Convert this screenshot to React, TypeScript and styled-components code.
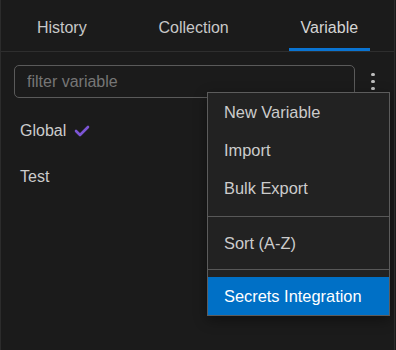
import React from 'react';
import styled, { createGlobalStyle } from 'styled-components';

const GlobalStyle = createGlobalStyle`
  html, body {
    margin: 0;
    padding: 0;
    background: #1a1a1a;
  }
  * {
    box-sizing: border-box;
  }
`;

const Panel = styled.div`
  position: relative;
  width: 395px;
  height: 350px;
  background: #1b1b1b;
  border-left: 1px solid #2c2c2c;
  border-right: 1px solid #2c2c2c;
  font-family: 'Liberation Sans', Arial, sans-serif;
  color: #cccccc;
  overflow: hidden;
`;

const TabBar = styled.div`
  display: flex;
  justify-content: space-around;
  height: 52px;
  border-bottom: 1px solid #2e2e2e;
`;

const Tab = styled.div<{ $active?: boolean }>`
  position: relative;
  display: flex;
  align-items: center;
  padding: 5px 12px 0;
  font-size: 16px;
  color: ${(p) => (p.$active ? '#d4d4d4' : '#c8c8c8')};
  cursor: pointer;
  &::after {
    content: '';
    display: ${(p) => (p.$active ? 'block' : 'none')};
    position: absolute;
    left: 0;
    right: 0;
    bottom: 0;
    height: 3px;
    background: #0a74d1;
  }
`;

const Toolbar = styled.div`
  display: flex;
  align-items: center;
  padding: 13px 0 0 13px;
`;

const SearchInput = styled.input`
  width: 341px;
  height: 33px;
  padding: 0 12px;
  background: transparent;
  border: 1px solid #5a5a5a;
  border-radius: 5px;
  font-family: inherit;
  font-size: 16px;
  color: #cccccc;
  outline: none;
  &::placeholder {
    color: #767676;
  }
`;

const KebabButton = styled.div`
  display: flex;
  flex-direction: column;
  align-items: center;
  justify-content: center;
  gap: 3.5px;
  width: 24px;
  height: 33px;
  margin-left: 6px;
  span {
    width: 3.5px;
    height: 3.5px;
    border-radius: 50%;
    background: #bdbdbd;
  }
`;

const List = styled.div`
  padding-top: 10px;
`;

const Row = styled.div`
  display: flex;
  align-items: center;
  gap: 8px;
  height: 46px;
  padding-left: 19px;
  font-size: 16px;
  color: #cccccc;
`;

const Menu = styled.div`
  position: absolute;
  left: 206px;
  top: 92px;
  width: 183px;
  background: #222222;
  border: 1px solid #5c5c5c;
  box-shadow: 0 4px 12px rgba(0, 0, 0, 0.4);
`;

const MenuItem = styled.div<{ $selected?: boolean }>`
  display: flex;
  align-items: center;
  height: 38px;
  padding: 0 16px;
  font-size: 16.4px;
  color: ${(p) => (p.$selected ? '#ffffff' : '#cccccc')};
  background: ${(p) => (p.$selected ? '#0070c6' : 'transparent')};
`;

const Divider = styled.div<{ $top: number; $bottom: number }>`
  height: 1px;
  background: #585858;
  margin: ${(p) => p.$top}px 0 ${(p) => p.$bottom}px;
`;

const Check = () => (
  <svg width="16" height="12" viewBox="0 0 16 12">
    <polyline
      points="2,6 6,10 14,2"
      fill="none"
      stroke="#7c55d4"
      strokeWidth="2.6"
      strokeLinecap="round"
      strokeLinejoin="round"
    />
  </svg>
);

const App = () => {
  return (
    <Panel>
      <GlobalStyle />
      <TabBar>
        <Tab>History</Tab>
        <Tab>Collection</Tab>
        <Tab $active>Variable</Tab>
      </TabBar>
      <Toolbar>
        <SearchInput placeholder="filter variable" />
        <KebabButton>
          <span />
          <span />
          <span />
        </KebabButton>
      </Toolbar>
      <List>
        <Row>
          Global
          <Check />
        </Row>
        <Row>Test</Row>
      </List>
      <Menu>
        <MenuItem>New Variable</MenuItem>
        <MenuItem>Import</MenuItem>
        <MenuItem>Bulk Export</MenuItem>
        <Divider $top={9} $bottom={7} />
        <MenuItem>Sort (A-Z)</MenuItem>
        <Divider $top={7} $bottom={7} />
        <MenuItem $selected>Secrets Integration</MenuItem>
      </Menu>
    </Panel>
  );
};

export default App;
